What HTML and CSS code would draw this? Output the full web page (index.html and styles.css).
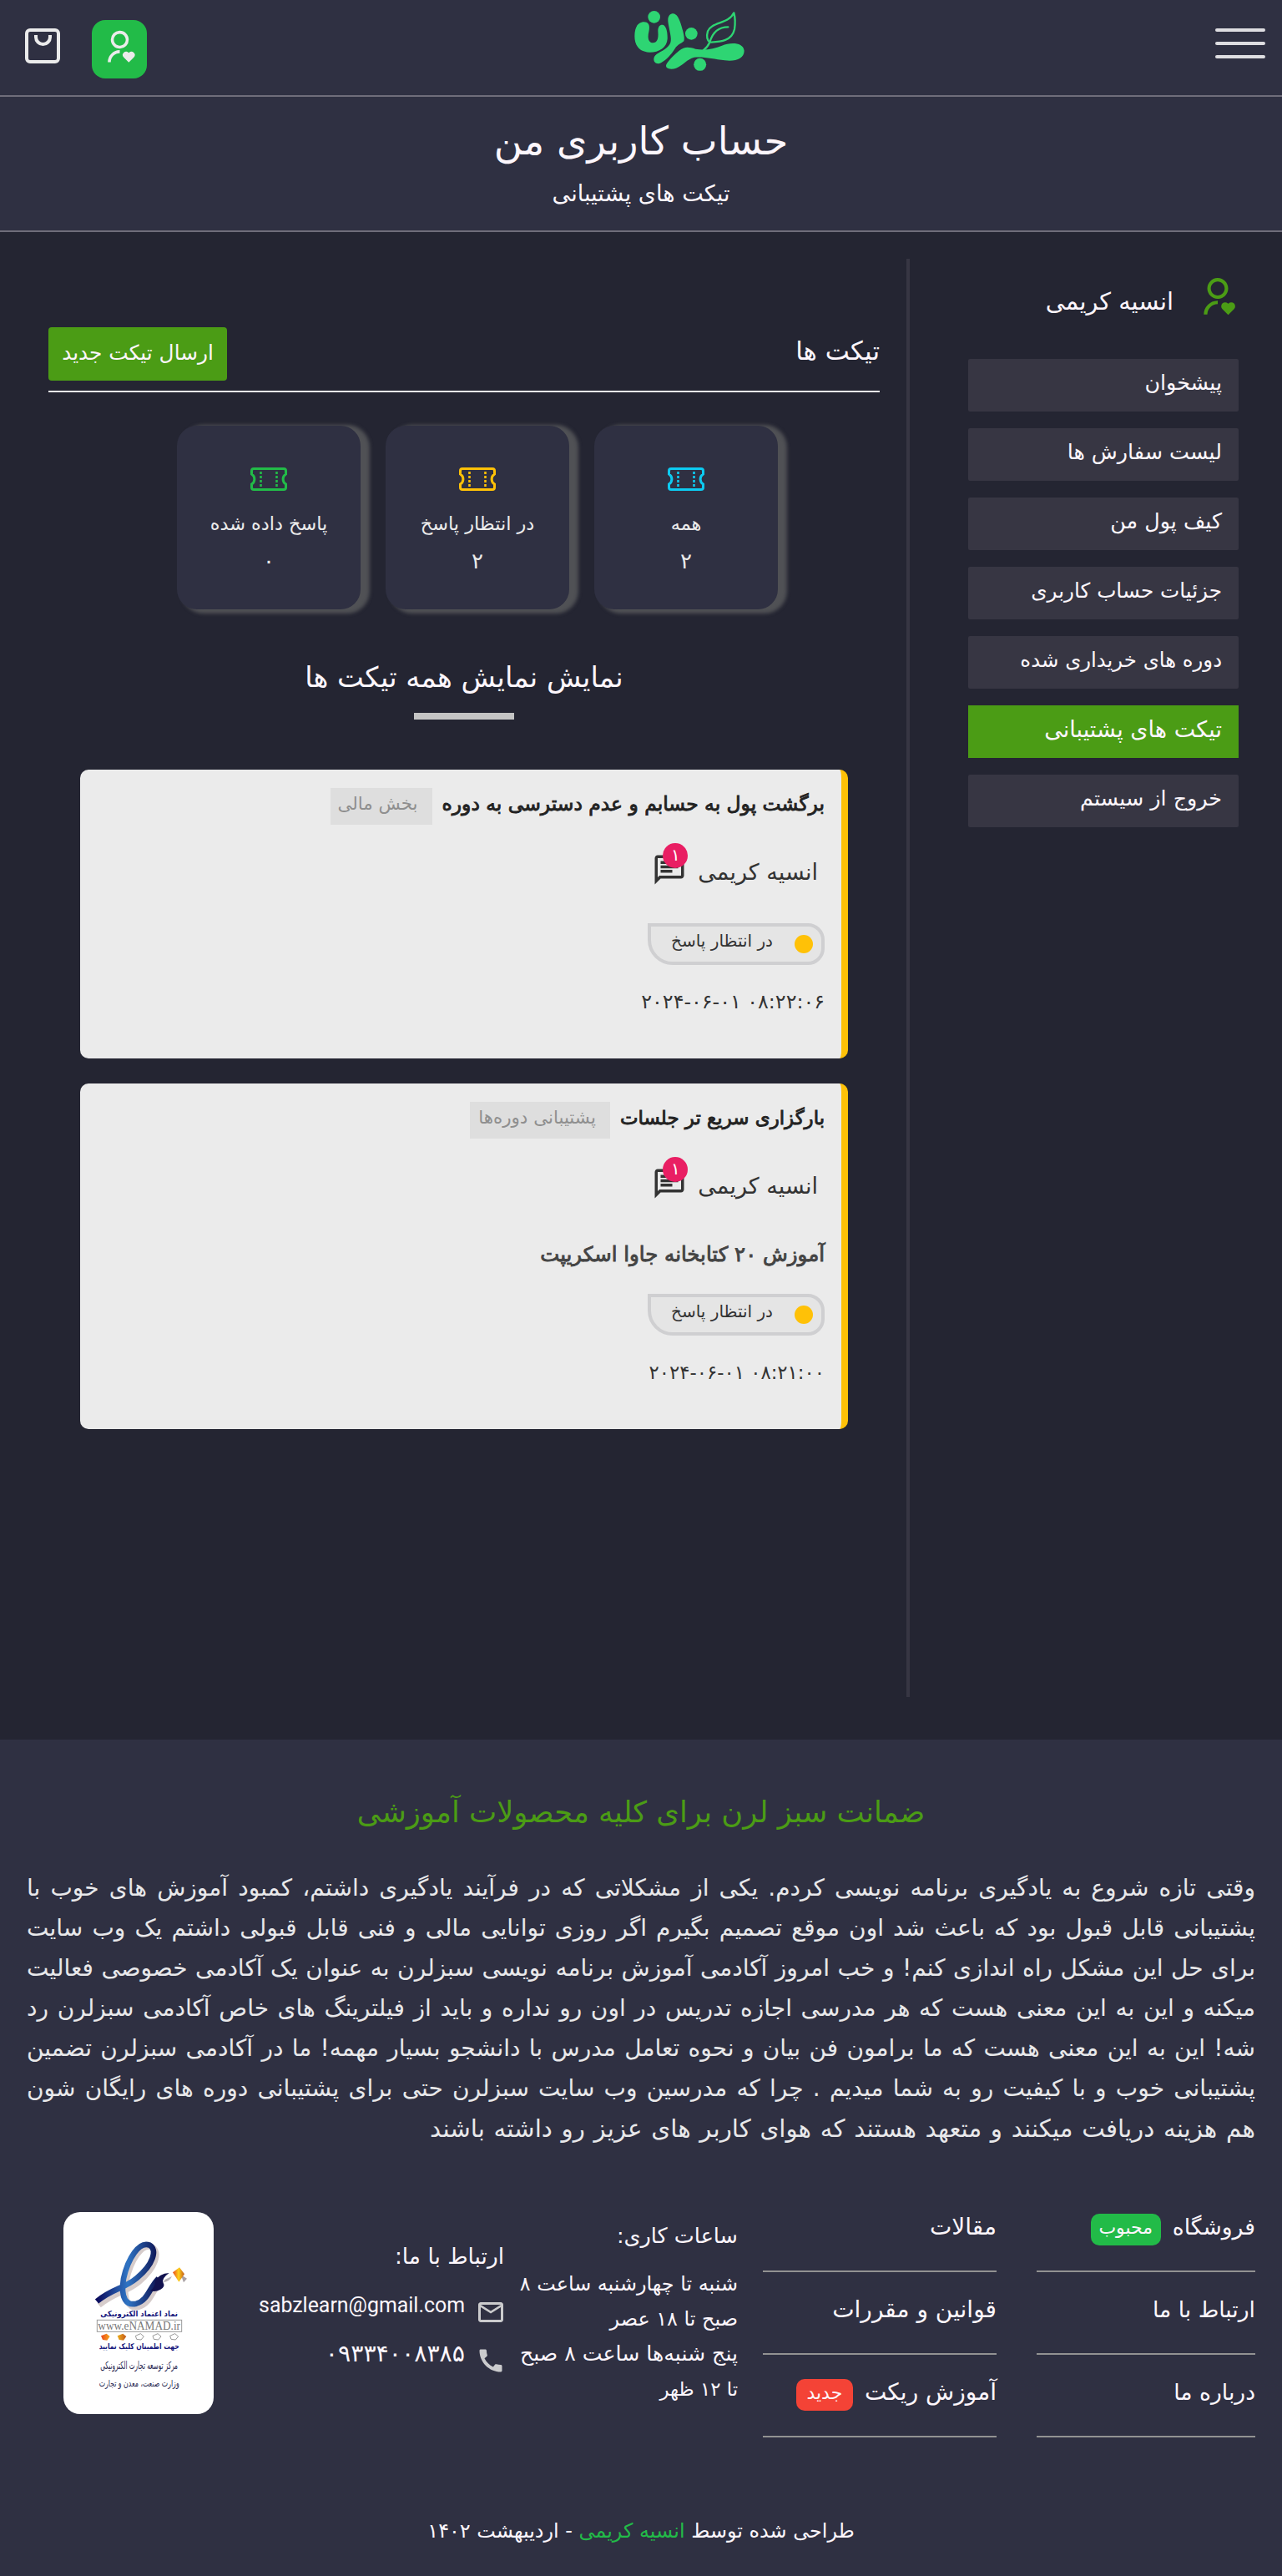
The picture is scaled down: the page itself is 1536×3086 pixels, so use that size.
FILE: index.html
```html
<!DOCTYPE html>
<html lang="fa" dir="rtl">
<head>
<meta charset="utf-8">
<title>حساب کاربری من</title>
<link rel="stylesheet" href="styles.css">
</head>
<body>
<svg class="defs" aria-hidden="true">
  <symbol id="user-heart" viewBox="0 0 24 24"><path d="M17.841 15.659l.176.177.178-.177a2.25 2.25 0 0 1 3.182 3.182l-3.36 3.359-3.358-3.359a2.25 2.25 0 0 1 3.182-3.182zM12 14v2a6 6 0 0 0-6 6H4a8 8 0 0 1 7.75-7.996L12 14zm0-13c3.315 0 6 2.685 6 6a5.998 5.998 0 0 1-5.775 5.996L12 13c-3.315 0-6-2.685-6-6a5.998 5.998 0 0 1 5.775-5.996L12 1zm0 2C9.79 3 8 4.79 8 7s1.79 4 4 4 4-1.79 4-4-1.79-4-4-4z"/></symbol>
  <symbol id="chat" viewBox="0 0 24 24"><path d="M4 4h16v12H5.17L4 17.17V4m0-2c-1.1 0-1.99.9-1.99 2L2 22l4-4h14c1.1 0 2-.9 2-2V4c0-1.1-.9-2-2-2H4zm2 10h8v2H6v-2zm0-3h12v2H6V9zm0-3h12v2H6V6z"/></symbol>
  <symbol id="ticket" viewBox="0 0 44 28"><path d="M4 1.500h36q2.500 0 2.500 2.500v4a7 7 0 0 0 0 12v4q0 2.500-2.500 2.500H4q-2.500 0-2.500-2.500v-4a7 7 0 0 0 0-12V4q0-2.500 2.500-2.500z" fill="none" stroke="currentColor" stroke-width="3"/><path d="M12.500 5v18M31.500 5v18" fill="none" stroke="currentColor" stroke-width="2.600" stroke-dasharray="3 2"/></symbol>
</svg>

<header class="topbar">
  <button class="burger" aria-label="منو"><span></span><span></span><span></span></button>
  <svg class="logo" viewBox="0 0 480 300">
    <path d="M46 130C46 95 60 79 80 79c20 1 21 16 17 36-5 20-2 38 15 39 18-1 20-19 18-42 0-17 7-24 17-23 13 3 18 26 17 51-2 30-29 48-64 48S46 165 46 130z"/>
    <path d="M166 72c0-16 9-23 18-23 14 1 22 16 31 46 7 24 12 42 8 53-10 10-21 10-32 27-16 25-31 40-50 51-15 7-27-1-26-15 3-20 27-22 47-40 19-16 16-31 10-61-4-20-6-29-6-38z"/>
    <path d="M160 232c5-12 25-32 46-50 19-15 34-14 59-6 35 6 65-1 95-12 30-12 76-13 80 18 0 28-30 40-70 35-40-4-70-14-110-11-25 6-40 29-65 39-20 7-41 1-35-13z"/>
    <circle cx="116" cy="61" r="22"/><circle cx="250" cy="121" r="22"/><circle cx="281" cy="232" r="22.500"/>
    <path class="leaf" d="M403 46c-18 40-81 32-94 66-5 18-1 33 7 40 34-2 79-2 89-47 3-20 2-44-2-59zM382 97c-37 0-57 23-66 55-6 14-14 22-24 30"/>
  </svg>
  <div class="actions">
    <a class="account"><svg class="account-icon"><use href="#user-heart"/></svg></a>
    <svg class="bag" viewBox="0 0 42 42"><rect x="2" y="2" width="38" height="38" rx="4"/><path d="M13 8v2.500a8.500 8.500 0 0 0 17 0V8"/></svg>
  </div>
</header>

<section class="banner">
  <h1>حساب کاربری من</h1>
  <p>تیکت های پشتیبانی</p>
</section>

<div class="layout">
  <aside class="sidebar">
    <div class="profile"><svg class="profile-icon"><use href="#user-heart"/></svg><span>انسیه کریمی</span></div>
    <nav class="menu">
      <a>پیشخوان</a>
      <a>لیست سفارش ها</a>
      <a>کیف پول من</a>
      <a class="details">جزئیات حساب کاربری</a>
      <a class="courses">دوره های خریداری شده</a>
      <a class="active">تیکت های پشتیبانی</a>
      <a>خروج از سیستم</a>
    </nav>
  </aside>

  <main class="content">
    <div class="content-head"><h2>تیکت ها</h2><a class="new-ticket">ارسال تیکت جدید</a></div>
    <div class="stats">
      <div class="stat"><svg class="stat-icon info"><use href="#ticket"/></svg><span>همه</span><b>۲</b></div>
      <div class="stat"><svg class="stat-icon warn"><use href="#ticket"/></svg><span>در انتظار پاسخ</span><b>۲</b></div>
      <div class="stat"><svg class="stat-icon done"><use href="#ticket"/></svg><span>پاسخ داده شده</span><b>۰</b></div>
    </div>
    <h3 class="list-title">نمایش نمایش همه تیکت ها</h3>
    <div class="tickets">
      <article class="ticket">
        <div class="ticket-head"><h4 class="subject">برگشت پول به حسابم و عدم دسترسی به دوره</h4><span class="dept dept-finance">بخش مالی</span></div>
        <div class="author"><span>انسیه کریمی</span><div class="replies"><svg class="chat-icon"><use href="#chat"/></svg><i>۱</i></div></div>
        <div class="status"><span class="dot"></span><span>در انتظار پاسخ</span></div>
        <time dir="ltr">۲۰۲۴-۰۶-۰۱ ۰۸:۲۲:۰۶</time>
      </article>
      <article class="ticket">
        <div class="ticket-head"><h4 class="subject subject-short">بارگزاری سریع تر جلسات</h4><span class="dept dept-course">پشتیبانی دوره‌ها</span></div>
        <div class="author"><span>انسیه کریمی</span><div class="replies"><svg class="chat-icon"><use href="#chat"/></svg><i>۱</i></div></div>
        <p class="course">آموزش ۲۰ کتابخانه جاوا اسکریپت</p>
        <div class="status"><span class="dot"></span><span>در انتظار پاسخ</span></div>
        <time class="short" dir="ltr">۲۰۲۴-۰۶-۰۱ ۰۸:۲۱:۰۰</time>
      </article>
    </div>
  </main>
</div>

<footer class="footer">
  <h2>ضمانت سبز لرن برای کلیه محصولات آموزشی</h2>
  <div class="about">
    <p>وقتی تازه شروع به یادگیری برنامه نویسی کردم. یکی از مشکلاتی که در فرآیند یادگیری داشتم، کمبود آموزش های خوب با</p>
    <p>پشتیبانی قابل قبول بود که باعث شد اون موقع تصمیم بگیرم اگر روزی توانایی مالی و فنی قابل قبولی داشتم یک وب سایت</p>
    <p>برای حل این مشکل راه اندازی کنم! و خب امروز آکادمی آموزش برنامه نویسی سبزلرن به عنوان یک آکادمی خصوصی فعالیت</p>
    <p>میکنه و این به این معنی هست که هر مدرسی اجازه تدریس در اون رو نداره و باید از فیلترینگ های خاص آکادمی سبزلرن رد</p>
    <p>شه! این به این معنی هست که ما برامون فن بیان و نحوه تعامل مدرس با دانشجو بسیار مهمه! ما در آکادمی سبزلرن تضمین</p>
    <p>پشتیبانی خوب و با کیفیت رو به شما میدیم . چرا که مدرسین وب سایت سبزلرن حتی برای پشتیبانی دوره های رایگان شون</p>
    <p class="last">هم هزینه دریافت میکنند و متعهد هستند که هوای کاربر های عزیز رو داشته باشند</p>
  </div>
  <div class="columns">
    <ul class="links links-main">
      <li>فروشگاه<span class="tag popular">محبوب</span></li>
      <li>ارتباط با ما</li>
      <li>درباره ما</li>
    </ul>
    <ul class="links links-more">
      <li>مقالات</li>
      <li>قوانین و مقررات</li>
      <li>آموزش ریکت<span class="tag new">جدید</span></li>
    </ul>
    <div class="hours">
      <h5>ساعات کاری:</h5>
      <p>شنبه تا چهارشنبه ساعت ۸</p>
      <p>صبح تا ۱۸ عصر</p>
      <p class="thursday">پنج شنبه‌ها ساعت ۸ صبح</p>
      <p class="noon">تا ۱۲ ظهر</p>
    </div>
    <div class="contact">
      <h5>ارتباط با ما:</h5>
      <div class="contact-row"><svg viewBox="0 0 24 24"><path d="M22 6c0-1.100-.9-2-2-2H4c-1.100 0-2 .9-2 2v12c0 1.100.9 2 2 2h16c1.100 0 2-.9 2-2V6zm-2 0l-8 5-8-5h16zm0 12H4V8l8 5 8-5v10z"/></svg><span class="email">sabzlearn@gmail.com</span></div>
      <div class="contact-row phone"><svg viewBox="0 0 24 24"><path d="M20.010 15.380c-1.230 0-2.420-.2-3.530-.56-.35-.12-.74-.03-1.010.24l-1.570 1.970c-2.830-1.350-5.480-3.900-6.890-6.830l1.950-1.660c.27-.28.35-.67.24-1.020-.37-1.110-.56-2.300-.56-3.530 0-.54-.45-.99-.99-.99H4.190C3.650 3 3 3.240 3 3.990 3 13.280 10.730 21 20.010 21c.71 0 .99-.63.99-1.180v-3.450c0-.54-.45-.99-.99-.99z"/></svg><span>۰۹۳۳۴۰۰۸۳۸۵</span></div>
    </div>
    <div class="enamad">
      <svg viewBox="18 15 540 726" direction="rtl">
        <defs>
          <linearGradient id="ink" x1="0" x2="1" y1="0" y2="0"><stop offset="0" stop-color="#0b0b5c"/><stop offset=".5" stop-color="#2f74c4"/><stop offset="1" stop-color="#0d1150"/></linearGradient>
          <linearGradient id="gem" x1="0" x2="1"><stop offset="0" stop-color="#e8451b"/><stop offset=".5" stop-color="#ffd21a"/><stop offset="1" stop-color="#c2571b"/></linearGradient>
        </defs>
        <g fill="none" stroke-linejoin="round">
          <path d="M146 350C205 302 245 304 290 266 350 214 366 162 338 142 300 124 260 190 244 262 232 338 256 364 290 356 330 344 336 300 370 262" stroke="#d6cccb" stroke-width="20"/>
          <path d="M138 336C195 288 235 292 282 252 342 202 356 150 328 134 290 118 250 182 234 254 222 328 246 352 280 344 322 332 326 288 360 254" stroke="url(#ink)" stroke-width="20"/>
        </g>
        <path d="M348 262q14-26 50-28-26 18-22 34 10 16-10 26-18 10-36 4 20-14 18-36z" fill="#12124f"/>
        <path d="M378 268q22-4 30-22l-26 12z" fill="#b9b3b8"/>
        <path d="M440 240l22 14-12 14z" fill="#a9a0a4"/>
        <path d="M411 232l24-18 18 24-20 28z" fill="url(#gem)"/>
        <text x="290" y="390" class="seal-bold" textLength="278" lengthAdjust="spacingAndGlyphs">نماد اعتماد الکترونیکی</text>
        <rect x="139" y="403" width="304" height="42" fill="#fff" stroke="#9a9a9a" stroke-width="3"/>
        <text x="290" y="438" class="seal-url" direction="ltr" textLength="296" lengthAdjust="spacingAndGlyphs">www.eNAMAD.ir</text>
        <path d="M153 460l20-8 12 10-10 14-16-2zM212 460l20-8 12 10-10 14-16-2z" fill="url(#gem)"/>
        <path d="M277 460l18-8 12 10-10 12-16-2zM339 460l18-8 12 10-10 12-16-2zM401 460l18-8 12 10-10 12-16-2z" fill="none" stroke="#999" stroke-width="3"/>
        <text x="290" y="506" class="seal-bold" textLength="288" lengthAdjust="spacingAndGlyphs">جهت اطمینان کلیک نمایید</text>
        <text x="290" y="580" class="seal-script" textLength="278" lengthAdjust="spacingAndGlyphs">مرکز توسعه تجارت الکترونیکی</text>
        <text x="290" y="643" class="seal-script small" textLength="288" lengthAdjust="spacingAndGlyphs">وزارت صنعت، معدن و تجارت</text>
      </svg>
    </div>
  </div>
  <p class="copyright">طراحی شده توسط <span>انسیه کریمی</span> - اردیبهشت ۱۴۰۲</p>
</footer>
</body>
</html>
```
FILE: styles.css
```css
* { box-sizing: border-box; margin: 0; padding: 0; }

body {
  background: #242532;
  color: #fcf6fc;
  font-family: "DejaVu Sans", sans-serif;
  white-space: nowrap;
}

h1, h2, h3, h4, h5, b, i { font-weight: 400; font-style: normal; }
svg { display: block; flex: none; }
ul { list-style: none; }
.defs { display: none; }

/* top bar */
.topbar {
  display: flex;
  align-items: flex-start;
  height: 116px;
  padding: 0 20px 0 30px;
  background: #2f3042;
  border-bottom: 2px solid #6f6d7a;
}
.burger {
  display: flex;
  flex-direction: column;
  gap: 12px;
  width: 60px;
  margin-top: 34px;
  background: none;
  border: 0;
}
.burger span { height: 4px; border-radius: 2px; background: #dedde1; }
.logo { width: 160px; height: 100px; margin-right: 551px; fill: #2ed573; }
.leaf { fill: none; stroke: #2ed573; stroke-width: 7; stroke-linejoin: round; stroke-linecap: round; }
.actions { display: flex; gap: 38px; margin-right: auto; }
.account {
  width: 66px;
  height: 70px;
  margin-top: 24px;
  padding: 11px 11px 0;
  border-radius: 16px;
  background: #22bb48;
}
.account-icon { width: 43px; height: 43px; fill: #ebebeb; }
.bag { width: 42px; height: 42px; margin-top: 34px; fill: none; stroke: #ebebeb; stroke-width: 4; }

/* page banner */
.banner {
  height: 162px;
  padding-top: 23px;
  background: #2f3042;
  border-bottom: 2px solid #6f6d7a;
  text-align: center;
}
.banner h1 { font-size: 46.6px; line-height: 60px; }
.banner p { margin-top: 13px; font-size: 27.1px; line-height: 40px; }

.layout { display: flex; height: 1806px; }

/* account navigation */
.sidebar {
  width: 450px;
  height: 1723px;
  margin-top: 32px;
  padding: 0 52px 0 70px;
  border-left: 4px solid #373643;
}
.profile { display: flex; gap: 28px; height: 120px; padding-top: 21px; font-size: 28.8px; line-height: 50px; }
.profile span { margin-top: 5px; }
.profile-icon { width: 50px; height: 50px; fill: #4b9c15; }
.menu { display: flex; flex-direction: column; gap: 20px; }
.menu a {
  height: 63px;
  padding: 0 20px;
  border-radius: 2px;
  background: #373643;
  font-size: 25.4px;
  line-height: 57px;
}
.menu .details { font-size: 24.7px; }
.menu .courses { font-size: 24.4px; }
.menu .active { border-radius: 0; background: #4b9c15; font-size: 27.1px; }

/* tickets page */
.content { width: 1086px; padding: 114px 32px 0 58px; }
.content-head {
  display: flex;
  justify-content: space-between;
  padding-bottom: 12px;
  border-bottom: 2px solid #ebebeb;
}
.content-head h2 { font-size: 30.9px; line-height: 57px; }
.new-ticket {
  width: 214px;
  height: 64px;
  border-radius: 4px;
  background: #4b9c15;
  font-size: 24.8px;
  line-height: 61px;
  text-align: center;
}

.stats { display: flex; gap: 30px; margin: 40px 122px 0 0; }
.stat {
  display: flex;
  flex-direction: column;
  align-items: center;
  width: 220px;
  height: 220px;
  padding-top: 50px;
  border-radius: 24px;
  background: #2f3042;
  box-shadow: 8px 2px 4px 3px #505155;
  color: #ebebeb;
  line-height: 40px;
}
.stat span { margin-top: 19px; font-size: 22.4px; }
.stat b { margin-top: 5px; font-size: 26px; }
.stat-icon { width: 44px; height: 28px; }
.info { color: #0dcaf0; }
.warn { color: #ffc107; }
.done { color: #22bb48; }

.list-title {
  display: flex;
  flex-direction: column;
  align-items: center;
  gap: 17px;
  margin-top: 57px;
  font-size: 33.8px;
  line-height: 50px;
}
.list-title::after { content: ""; width: 120px; height: 8px; background: #c4c4c4; }

.tickets { display: flex; flex-direction: column; gap: 30px; margin: 60px 38px 0; }
.ticket {
  padding: 22px 20px 43px;
  border-right: 8px solid #ffc107;
  border-radius: 10px;
  background: #ebebeb;
  color: #333;
}
.ticket-head { display: flex; align-items: flex-start; gap: 12px; }
.subject, .course { font-size: 23.4px; line-height: 39px; -webkit-text-stroke: 0.9px currentColor; }
.subject { height: 40px; color: #222; }
.subject-short { font-size: 22.9px; }
.dept {
  height: 44px;
  padding: 0 17px 0 0;
  background: #dedede;
  color: #8f8f8f;
  font-size: 21.4px;
  line-height: 38px;
}
.dept-finance { width: 122px; }
.dept-course { width: 168px; }
.author { display: flex; gap: 13px; margin-top: 31px; padding-right: 8px; font-size: 27px; line-height: 51px; height: 50px; }
.replies { position: relative; margin-top: 2px; }
.chat-icon { width: 42px; height: 42px; fill: #333; }
.replies i {
  position: absolute;
  top: -11px;
  left: 13px;
  width: 30px;
  height: 30px;
  border-radius: 50%;
  background: #e91e63;
  color: #fff;
  font-size: 20px;
  line-height: 28px;
  text-align: center;
}
.course { height: 40px; margin: 38px 0 -10px; color: #444; font-size: 24.4px; }
.status {
  display: flex;
  gap: 26px;
  width: 212px;
  height: 50px;
  margin-top: 37px;
  padding: 0 10px;
  border: 4px solid #cfcfd1;
  border-radius: 0 20px 20px 30px;
  background: #e5e5e5;
  font-size: 20px;
  line-height: 35px;
}
.dot { width: 22px; height: 22px; margin-top: 10px; border-radius: 50%; background: #ffc107; }
.ticket time { display: block; margin-top: 19px; font-size: 23.8px; line-height: 50px; text-align: right; }
.ticket .short { font-size: 22.8px; }

/* footer */
.footer { height: 1002px; padding: 57px 32px 0; background: #2f3042; }
.footer h2 { color: #4b9c15; font-size: 35.3px; line-height: 60px; text-align: center; }
.about { margin-top: 37px; color: #e8e8ea; font-size: 28px; line-height: 48px; white-space: normal; }
.about p { height: 48px; text-align: justify; text-align-last: justify; }
.about .last { width: 989px; font-size: 29.3px; }

.columns { display: flex; height: 384px; margin-top: 49px; }
.links li {
  display: flex;
  gap: 14px;
  height: 99px;
  border-bottom: 2px solid #929292;
  line-height: 90px;
}
.links-main { width: 262px; font-size: 26.6px; }
.links-more { width: 280px; margin-right: 48px; font-size: 28px; }
.tag {
  height: 38px;
  margin-top: 29px;
  border-radius: 10px;
  font-size: 22px;
  line-height: 34px;
  text-align: center;
}
.popular { width: 84px; background: #22bb48; }
.new { width: 68px; background: #f44336; }

.hours { width: 262px; margin-right: 30px; padding-top: 30px; font-size: 23.9px; line-height: 42px; }
.hours h5 { margin-bottom: 12px; font-size: 25.5px; line-height: 50px; }
.hours .thursday { font-size: 25.2px; }
.hours .noon { font-size: 22.8px; }

.contact { width: 296px; margin-right: 18px; padding-top: 55px; }
.contact h5 { font-size: 26.4px; line-height: 50px; }
.contact-row { display: flex; gap: 13px; margin: 14px -2px 0 0; line-height: 40px; }
.contact-row svg { width: 36px; height: 36px; margin-top: 10px; fill: #cbcbcd; }
.email { font-family: Roboto, sans-serif; font-size: 24.9px; }
.phone { margin-top: 12px; font-size: 28.3px; }

.enamad { width: 180px; height: 242px; margin: 27px 52px 0 0; border-radius: 20px; background: #fff; }
.enamad svg { overflow: visible; }
.enamad text { fill: #17177c; text-anchor: middle; font-family: "DejaVu Sans Condensed", "DejaVu Sans", sans-serif; }
.enamad .seal-bold { font-size: 28px; font-weight: 700; }
.enamad .seal-url { fill: #777; font-family: "Liberation Serif", serif; font-size: 42px; }
.enamad .seal-script { fill: #26264f; font-size: 38px; }
.enamad .small { font-size: 33px; }

.copyright { font-size: 23.9px; line-height: 50px; text-align: center; }
.copyright span { color: #22bb48; }
```
